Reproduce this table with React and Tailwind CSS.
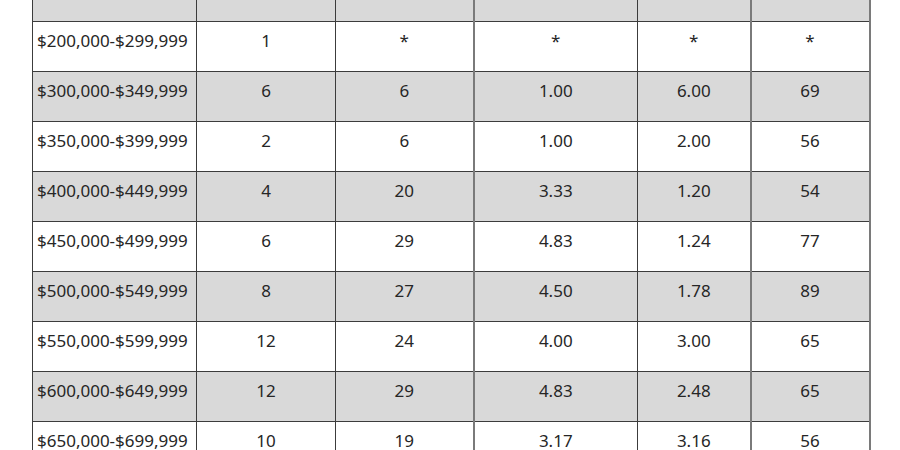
const rows = [
  ['$200,000-$299,999', '1', '*', '*', '*', '*'],
  ['$300,000-$349,999', '6', '6', '1.00', '6.00', '69'],
  ['$350,000-$399,999', '2', '6', '1.00', '2.00', '56'],
  ['$400,000-$449,999', '4', '20', '3.33', '1.20', '54'],
  ['$450,000-$499,999', '6', '29', '4.83', '1.24', '77'],
  ['$500,000-$549,999', '8', '27', '4.50', '1.78', '89'],
  ['$550,000-$599,999', '12', '24', '4.00', '3.00', '65'],
  ['$600,000-$649,999', '12', '29', '4.83', '2.48', '65'],
  ['$650,000-$699,999', '10', '19', '3.17', '3.16', '56'],
]

// vertical rule per column: left edge style
const cellBorders = [
  'border-l border-l-[#3c3c3c]',
  'border-l border-l-[#3c3c3c]',
  'border-l border-l-[#3c3c3c]',
  'border-l-2 border-l-[#7a7a7a]',
  'border-l border-l-[#3c3c3c]',
  'border-l-2 border-l-[#7a7a7a] border-r-2 border-r-[#7a7a7a]',
]

const App = () => {
  return (
    <div className="w-[900px] h-[450px] overflow-hidden bg-white pl-[32px]">
      <table
        className="table-fixed border-collapse text-[17px] leading-[20px] text-[#262626]"
        style={{ fontFamily: '"Noto Sans", "Open Sans", sans-serif' }}
      >
        <colgroup>
          <col className="w-[164px]" />
          <col className="w-[139px]" />
          <col className="w-[138px]" />
          <col className="w-[164px]" />
          <col className="w-[113px]" />
          <col className="w-[119px]" />
        </colgroup>
        <tbody>
          {/* header row, mostly scrolled out of view */}
          <tr className="h-[21px] bg-[#d9d9d9] border-b border-b-[#3c3c3c]">
            {cellBorders.map((b, i) => (
              <td key={i} className={`p-0 ${b}`}></td>
            ))}
          </tr>
          {rows.map((row, r) => (
            <tr
              key={r}
              className={`h-[50px] border-b border-b-[#3c3c3c] ${r % 2 === 1 ? 'bg-[#d9d9d9]' : 'bg-white'}`}
            >
              {row.map((cell, c) => (
                <td
                  key={c}
                  className={`align-top pt-[9px] pb-0 ${c === 0 ? 'text-left pl-[4px]' : 'text-center'} ${cellBorders[c]}`}
                >
                  {cell}
                </td>
              ))}
            </tr>
          ))}
        </tbody>
      </table>
    </div>
  )
}

export default App
